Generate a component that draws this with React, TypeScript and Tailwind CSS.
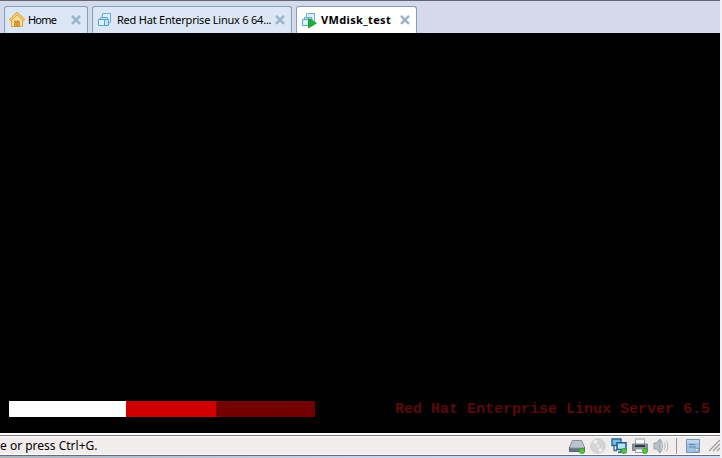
import type { ReactNode } from "react";

const Close = () => (
  <svg className="block h-[10px] w-[10px] shrink-0" viewBox="0 0 10 10">
    <path d="M1 .8 9 8.8M9 .8 1 8.8" stroke="#9ab4c9" strokeWidth="2.5" />
  </svg>
);

const HomeIcon = () => (
  <svg className="block h-4 w-4 shrink-0" viewBox="0 0 16 16">
    <path d="M2.5 7.5 8 3l5.5 4.5V14.5h-11Z" fill="#fde29a" stroke="#e2a33c" />
    <path d="M.8 8.4 8 1.6l7.2 6.8" fill="none" stroke="#e0a03a" strokeWidth="2.8" />
    <path d="M1.2 8 8 1.8l6.8 6.2" fill="none" stroke="#fbd37c" strokeWidth="1.2" />
    <path d="M5.5 9h5v5.5h-5Z" fill="#d49a38" stroke="#c0842c" strokeWidth=".6" />
  </svg>
);

const MachineIcon = ({ running = false }: { running?: boolean }) => (
  <svg className="block h-4 w-4 shrink-0 overflow-visible" viewBox="0 0 16 16">
    <path d="M5.5 1.5h8v9h-8Z" fill="#d9f0fc" stroke="#6faed3" />
    <path d="M3.5 5.5h7v5h-7Z" fill="#b9e0f5" stroke="#6faed3" />
    <path d="M7.5 7.5h4v6h-4Z" fill="#bde4f7" stroke="#5aa3ce" />
    <path d="M1.5 7.5h6v6h-6Z" fill="#def5fe" stroke="#5aa3ce" />
    {running && <path d="M7.5 6.5v9.5l8-4.8Z" fill="#19b238" stroke="#149530" strokeWidth=".7" />}
  </svg>
);

const Tab = ({ className, children }: { className: string; children: ReactNode }) => (
  <div className={`flex h-[27px] shrink-0 items-center rounded-t-[3px] border border-b-0 border-[#819fb8] ${className}`}>
    {children}
  </div>
);

const Light = () => <circle cx="13" cy="13" r="2.6" fill="#55c638" stroke="#2b9a22" strokeWidth=".7" />;

const DiskIcon = () => (
  <svg className="block h-4 w-4" viewBox="0 0 16 16">
    <path d="M3.3 2.5h9.4l2.8 7H.5Z" fill="#bac4cc" stroke="#7f8a94" strokeWidth=".9" />
    <path d="M.5 9.5h15V13.5H.5Z" fill="#68737e" stroke="#505b66" strokeWidth=".9" />
    <path d="M1 9.7h14" stroke="#d6dce0" strokeWidth=".8" />
    <Light />
  </svg>
);

const DiscIcon = () => (
  <svg className="block h-4 w-4" viewBox="0 0 16 16">
    <circle cx="8" cy="8" r="7.2" fill="#d6d6d6" stroke="#c5c5c5" strokeWidth=".8" />
    <path d="M8 8 2.5 3.8A7 7 0 0 1 7 1.5ZM8 8l5.5 4.2A7 7 0 0 1 9 14.5Z" fill="#eee" />
    <circle cx="8" cy="8" r="2.3" fill="#f0f0f0" stroke="#bebebe" strokeWidth=".7" />
    <circle cx="8" cy="8" r=".7" fill="#bbb" />
  </svg>
);

const NetworkIcon = () => (
  <svg className="block h-4 w-4" viewBox="0 0 16 16">
    <path d="M1 1h9v6.5H1Z" fill="#75bbe4" stroke="#2c668f" strokeWidth="1.4" />
    <path d="M3 8v4.5h3" fill="none" stroke="#376d91" strokeWidth="1.3" />
    <path d="M6 4.8h9v6.7H6Z" fill="#b4e3f8" stroke="#205f8e" strokeWidth="1.5" />
    <path d="M10 12v2M7 14.3h5" stroke="#346787" strokeWidth="1.4" />
    <Light />
  </svg>
);

const PrinterIcon = () => (
  <svg className="block h-4 w-4" viewBox="0 0 16 16">
    <path d="M3.5 1h9v6h-9Z" fill="#fff" stroke="#989da2" />
    <path d="M.5 6h15v6.5H.5Z" fill="#8b949b" stroke="#798188" />
    <path d="M3 7h10v2H3Z" fill="#343b42" />
    <path d="M3.5 11h9v3.5h-9Z" fill="#f7f7f7" stroke="#9ca2a7" />
    <Light />
  </svg>
);

const SoundIcon = () => (
  <svg className="block h-4 w-4" viewBox="0 0 16 16">
    <path d="M1 5h2.5L7 1.2v13.6L3.5 11H1Z" fill="#b9c1c8" stroke="#98a4ad" />
    <path d="M7 1.2c3 2.5 3 11.1 0 13.6Z" fill="#dfe4e8" stroke="#98a4ad" />
    <path d="M11 4.5c1.7 2 1.7 5 0 7M13 2.5c2.5 3 2.5 8 0 11" fill="none" stroke="#b2bac0" />
  </svg>
);

const NoteIcon = () => (
  <svg className="block h-[14px] w-[14px]" viewBox="0 0 14 14">
    <path d="M.5 .5h13v13H.5Z" fill="#a0c0df" stroke="#7795b7" />
    <path d="M1 1h12v3H1Z" fill="#c0d7eb" />
    <path d="M3 5.5h6M3 8h7" stroke="#6386aa" />
    <path d="M9 13.5V9.5h4.5Z" fill="#eef5fb" stroke="#6f91b5" strokeWidth=".8" />
  </svg>
);

export default function App() {
  return (
    <div className="flex h-[458px] w-[722px] overflow-hidden bg-[#f0f0f2] font-['Noto_Sans',sans-serif] text-black">
      <div className="flex w-[720px] shrink-0 flex-col">
        <header className="flex h-[33px] shrink-0 items-end gap-1 border-t border-[#656775] bg-[#d4d9ec] pl-1">
          <Tab className="w-[84px] bg-[#dce7f5] pl-1">
            <HomeIcon />
            <span className="ml-[3px] w-[43px] text-[11px] tracking-[-0.8px]">Home</span>
            <Close />
          </Tab>
          <Tab className="w-[200px] bg-[#dce7f5] pl-1">
            <MachineIcon />
            <span className="ml-1 w-[158px] whitespace-nowrap text-[11px] tracking-[-0.22px]">Red Hat Enterprise Linux 6 64...</span>
            <Close />
          </Tab>
          <Tab className="w-[121px] bg-white pl-1">
            <MachineIcon running />
            <span className="ml-1 w-[79px] whitespace-nowrap text-[11px] font-bold tracking-[0.35px]">VMdisk_test</span>
            <Close />
          </Tab>
        </header>
        <main className="flex h-[400px] shrink-0 items-end justify-between bg-black pb-4 pl-[9px] pr-[10px]">
          <div className="flex h-4">
            <div className="w-[117px] bg-white" />
            <div className="w-[90px] bg-[#d00000]" />
            <div className="w-[99px] bg-[#730000]" />
          </div>
          <p className="whitespace-pre font-['Liberation_Mono',monospace] text-[15px] font-bold leading-[14px] text-[#5c0909]">Red Hat Enterprise Linux Server 6.5</p>
        </main>
        <div className="h-1 shrink-0 border-t-2 border-b border-white bg-[#77737f]" />
        <footer className="flex h-[17px] shrink-0 items-center bg-[#f0edec]">
          <span className="grow text-[12px] leading-4">e or press Ctrl+G.</span>
          <div className="flex items-center gap-[5px]">
            <DiskIcon /><DiscIcon /><NetworkIcon /><PrinterIcon /><SoundIcon />
          </div>
          <div className="ml-[7px] h-4 w-px bg-[#999]" />
          <div className="ml-[9px]"><NoteIcon /></div>
          <svg className="ml-[9px] block h-[13px] w-[11px]" viewBox="0 0 11 13">
            <path d="M0 12 11 1M4 12l7-7M8 12l3-3" stroke="#969696" strokeWidth="1.2" />
          </svg>
        </footer>
        <div className="h-px shrink-0 bg-white" />
        <div className="h-px shrink-0 bg-[#656b83]" />
        <div className="h-[2px] shrink-0 bg-linear-to-r from-[#a8b5bd] via-[#c9d3ec] to-[#cfdcf4]" />
      </div>
    </div>
  );
}
